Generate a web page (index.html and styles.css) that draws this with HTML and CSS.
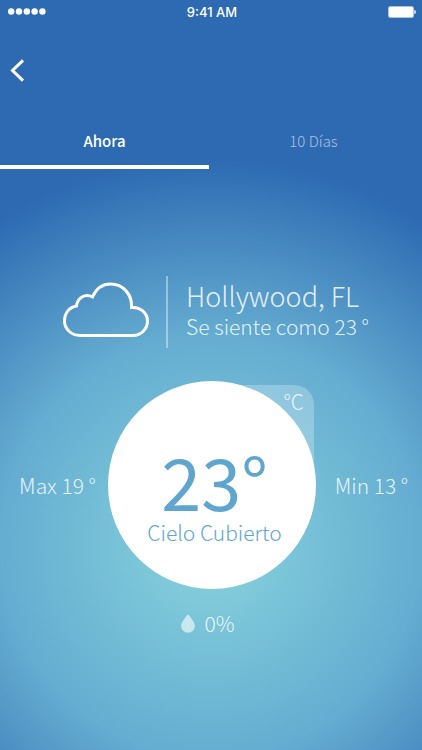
FILE: index.html
```html
<!DOCTYPE html>
<html lang="es">
<head>
<meta charset="utf-8">
<meta name="viewport" content="width=device-width, initial-scale=1">
<title>El tiempo en Hollywood, FL</title>
<link rel="stylesheet" href="styles.css">
</head>
<body>
<div class="screen">
  <div class="status">
    <svg class="signal" width="38" height="8" viewBox="0 0 38 8" aria-hidden="true"><circle cx="3.2" cy="3.500" r="3.2"/><circle cx="11" cy="3.500" r="3.2"/><circle cx="18.8" cy="3.500" r="3.2"/><circle cx="26.6" cy="3.500" r="3.2"/><circle cx="34.4" cy="3.500" r="3.2"/></svg>
    <span class="clock">9:41 AM</span>
    <svg class="battery" width="28" height="12" viewBox="0 0 28 12" aria-hidden="true"><rect class="battery-case" x="0.5" y="0.5" width="25" height="11" rx="1.5"/><rect x="1" y="1" width="24" height="10" rx="1"/><path d="M26.3 3.8q1.500 .5 1.500 2.200t-1.500 2.200z"/></svg>
  </div>
  <header class="header">
    <button class="back" type="button" aria-label="Atrás"><svg width="16" height="24" viewBox="0 0 16 24" aria-hidden="true"><path d="M13 1.300 2.500 11.500 13 21.700"/></svg></button>
  </header>
  <nav class="tabs">
    <a class="tab tab-active" href="#ahora" aria-current="page">Ahora</a>
    <a class="tab" href="#dias">10 Días</a>
  </nav>
  <main class="weather">
    <section class="place">
      <svg class="cloud" width="86" height="57" viewBox="0 0 86 57" aria-hidden="true"><path d="M17 53.500C8.500 53.500 1.500 47 1.500 39C1.500 31 6.500 25 13.500 24C14.500 16 22 11 29.500 15C33 7 39.500 2 47.500 2C60 2 69.500 12.500 68.500 25.500C77 24.500 84.500 31 84.500 39C84.500 47 78 53.500 70 53.500Z"/></svg>
      <div class="place-text">
        <h1 class="city">Hollywood, FL</h1>
        <p class="feels">Se siente como 23 °</p>
      </div>
    </section>
    <section class="now">
      <p class="range">Max 19 °</p>
      <div class="dial">
        <button class="unit" type="button">°C</button>
        <div class="disc">
          <p class="degrees">23°</p>
          <p class="sky">Cielo Cubierto</p>
        </div>
      </div>
      <p class="range">Min 13 °</p>
    </section>
    <p class="rain">
      <svg width="14" height="19" viewBox="0 0 14 19" aria-hidden="true"><path d="M7 .3C9.500 3.500 13.800 7.800 13.800 12A6.800 6.700 0 0 1 .2 12C.2 7.800 4.500 3.500 7 .3Z"/></svg>
      <span>0%</span>
    </p>
  </main>
</div>
</body>
</html>
```
FILE: styles.css
```css
* { box-sizing: border-box; }
body, h1, p { margin: 0; }
body {
  font-family: "Noto Sans CJK SC", "Noto Sans", sans-serif;
  font-weight: 300;
  color: #fff;
}
button {
  padding: 0;
  border: 0;
  background: none;
  color: inherit;
  font: inherit;
}
svg { display: block; fill: currentColor; }
.screen {
  min-height: 100vh;
  background: radial-gradient(circle 388px at 50% 546px, #88d3dd, #65add1 54%, #2d6ab2);
}
.status {
  display: grid;
  grid-template-columns: 1fr auto 1fr;
  align-items: center;
  height: 24px;
  padding: 0 6px 0 8px;
}
.clock {
  font: 500 13px/24px Inter, sans-serif;
}
.battery { justify-self: end; }
.battery-case { fill: none; stroke: #fff; stroke-opacity: 0.6; }
.header { padding: 35px 8px 0; }
.back { display: block; padding-left: 2px; }
.back path { fill: none; stroke: #fff; stroke-width: 3; }
.tabs {
  display: grid;
  grid-template-columns: 1fr 1fr;
  margin-top: 34px;
  padding-right: 4px;
}
.tab {
  padding: 12px 0;
  border-bottom: 4px solid transparent;
  font-size: 15px;
  line-height: 24px;
  text-align: center;
  text-decoration: none;
  color: rgba(255, 255, 255, 0.6);
}
.tab-active { color: #fff; font-weight: 500; border-color: #fff; }
.place {
  display: flex;
  justify-content: center;
  align-items: center;
  gap: 17px;
  margin-top: 107px;
  padding-left: 10px;
}
.cloud { fill: none; stroke: #fff; stroke-width: 3; margin-bottom: 4px; }
.place-text {
  padding: 3px 0 9px 18px;
  border-left: 2px solid rgba(255, 255, 255, 0.4);
}
.city, .feels, .range, .unit, .rain { color: rgba(255, 255, 255, 0.86); }
.city { font-size: 27px; font-weight: 300; line-height: 34px; }
.feels { font-size: 21px; line-height: 26px; }
.now {
  display: grid;
  grid-template-columns: 1fr 208px 1fr;
  align-items: center;
  margin-top: 33px;
  padding-left: 2px;
}
.range { padding-left: 5px; font-size: 21px; line-height: 32px; text-align: center; }
.dial { position: relative; }
.unit {
  position: absolute;
  top: 4px;
  right: 2px;
  width: 104px;
  height: 104px;
  padding-right: 10px;
  display: flex;
  justify-content: flex-end;
  border-radius: 0 20px 0 0;
  background: rgba(255, 255, 255, 0.25);
  font-size: 21px;
  line-height: 32px;
}
.disc {
  position: relative;
  display: flex;
  flex-direction: column;
  align-items: center;
  height: 208px;
  padding: 62px 0 0 5px;
  border-radius: 50%;
  background: #fff;
  color: #60a5cd;
}
.degrees { font-size: 72px; font-weight: 400; line-height: 74px; }
.sky { font-size: 21px; line-height: 30px; }
.rain {
  display: flex;
  justify-content: center;
  align-items: center;
  gap: 9px;
  padding: 18px 6px 18px 0;
  font-size: 21px;
  line-height: 32px;
}
.rain svg { opacity: 0.7; }
```
